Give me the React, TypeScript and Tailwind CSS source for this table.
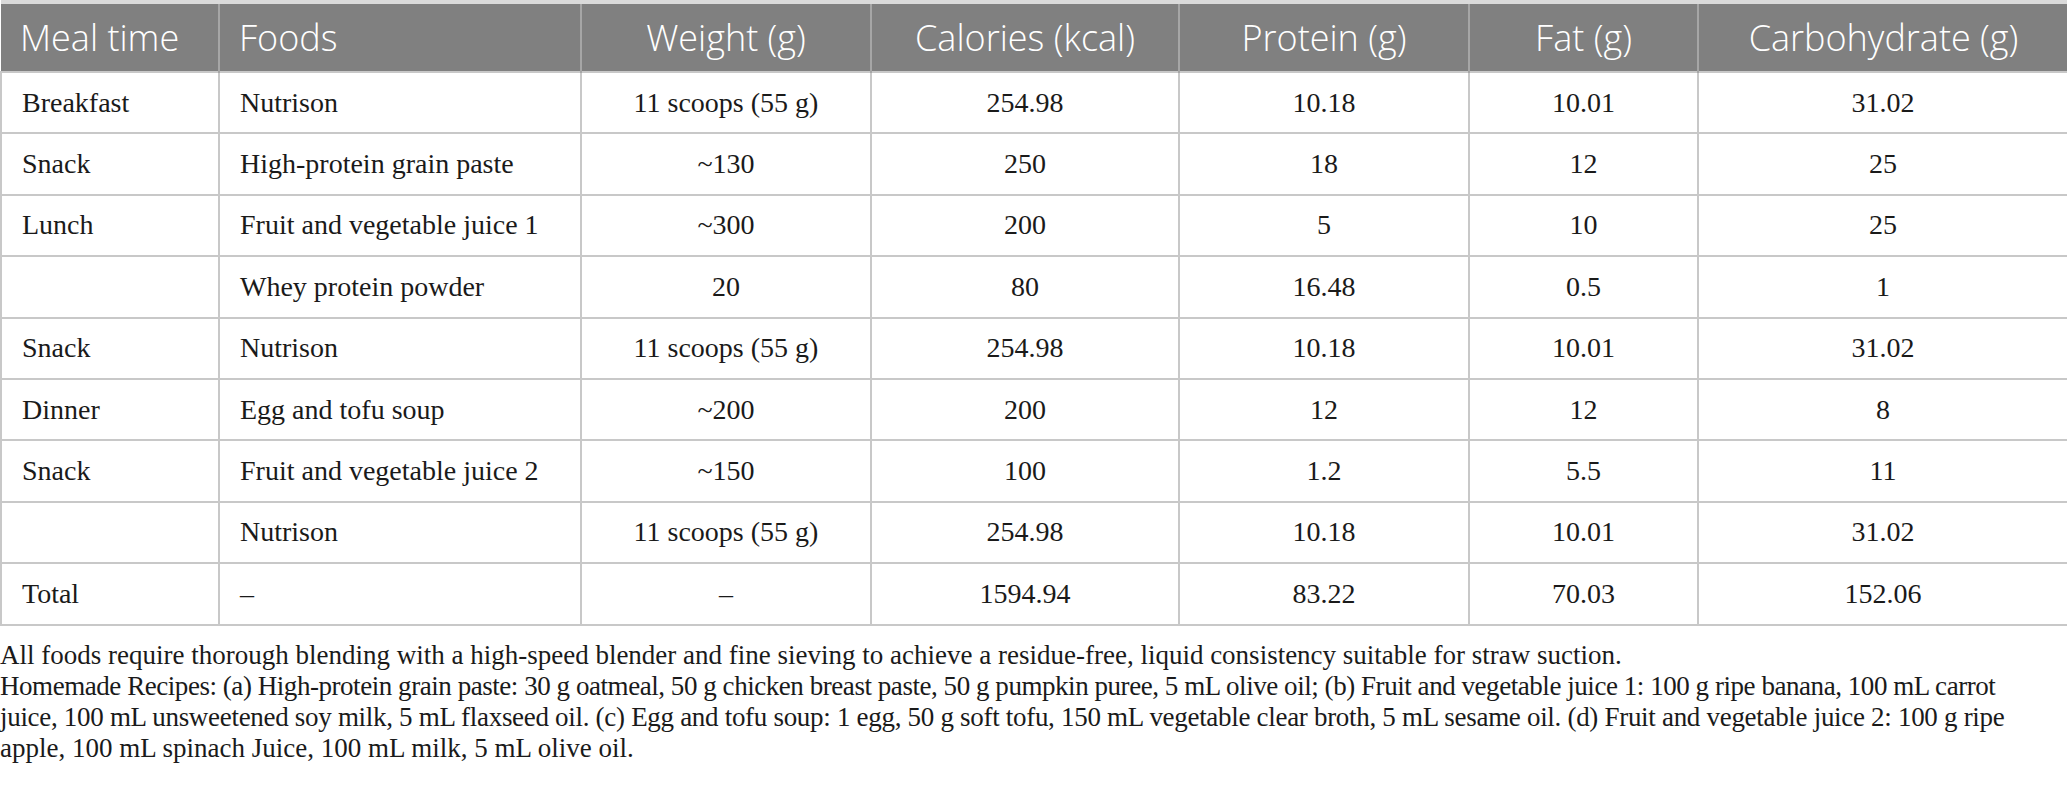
import React from "react";

const rows: string[][] = [
  ["Breakfast", "Nutrison", "11 scoops (55 g)", "254.98", "10.18", "10.01", "31.02"],
  ["Snack", "High-protein grain paste", "~130", "250", "18", "12", "25"],
  ["Lunch", "Fruit and vegetable juice 1", "~300", "200", "5", "10", "25"],
  ["", "Whey protein powder", "20", "80", "16.48", "0.5", "1"],
  ["Snack", "Nutrison", "11 scoops (55 g)", "254.98", "10.18", "10.01", "31.02"],
  ["Dinner", "Egg and tofu soup", "~200", "200", "12", "12", "8"],
  ["Snack", "Fruit and vegetable juice 2", "~150", "100", "1.2", "5.5", "11"],
  ["", "Nutrison", "11 scoops (55 g)", "254.98", "10.18", "10.01", "31.02"],
  ["Total", "\u2013", "\u2013", "1594.94", "83.22", "70.03", "152.06"],
];

const headers = ["Meal time", "Foods", "Weight (g)", "Calories (kcal)", "Protein (g)", "Fat (g)", "Carbohydrate (g)"];
const widths = ["w-[218px]", "w-[362px]", "w-[290px]", "w-[308px]", "w-[290px]", "w-[229px]", "w-[370px]"];

export default function App() {
  return (
    <div className="w-[2067px] bg-white">
      <table className="w-[2067px] table-fixed border-collapse">
        <colgroup>
          {widths.map((w, i) => (
            <col key={i} className={w} />
          ))}
        </colgroup>
        <thead>
          <tr className="h-[70px] bg-[#808080]">
            {headers.map((h, i) => (
              <th
                key={i}
                className={
                  "border-x-2 border-t-[4px] border-x-[#a6a6a6] border-t-[#dadada] first:border-l-0 last:border-r-0 font-light text-white text-[36px] leading-none font-['Open_Sans',sans-serif] " +
                  (i < 2 ? "text-left pl-[19px]" : "text-center")
                }
              >
                {h}
              </th>
            ))}
          </tr>
        </thead>
        <tbody>
          {rows.map((r, ri) => (
            <tr key={ri} className="h-[61.4px]">
              {r.map((c, ci) => (
                <td
                  key={ci}
                  className={
                    "border-2 border-[#c8c8c8] text-[28px] leading-none text-[#1a1a1a] font-['Liberation_Serif',serif] " +
                    (ci < 2 ? "text-left pl-[20px]" : "text-center")
                  }
                >
                  {c}
                </td>
              ))}
            </tr>
          ))}
        </tbody>
      </table>
      <div className="pt-[14px] text-[27px] leading-[31px] text-[#1a1a1a] font-['Liberation_Serif',serif] whitespace-nowrap">
        <p>All foods require thorough blending with a high-speed blender and fine sieving to achieve a residue-free, liquid consistency suitable for straw suction.</p>
        <p>
          <span className="block tracking-[-0.45px]">
            Homemade Recipes: (a) High-protein grain paste: 30 g oatmeal, 50 g chicken breast paste, 50 g pumpkin puree, 5 mL olive oil; (b) Fruit and vegetable juice 1: 100 g ripe banana, 100 mL carrot
          </span>
          <span className="block tracking-[-0.3px]">
            juice, 100 mL unsweetened soy milk, 5 mL flaxseed oil. (c) Egg and tofu soup: 1 egg, 50 g soft tofu, 150 mL vegetable clear broth, 5 mL sesame oil. (d) Fruit and vegetable juice 2: 100 g ripe
          </span>
          <span className="block">apple, 100 mL spinach Juice, 100 mL milk, 5 mL olive oil.</span>
        </p>
      </div>
    </div>
  );
}
